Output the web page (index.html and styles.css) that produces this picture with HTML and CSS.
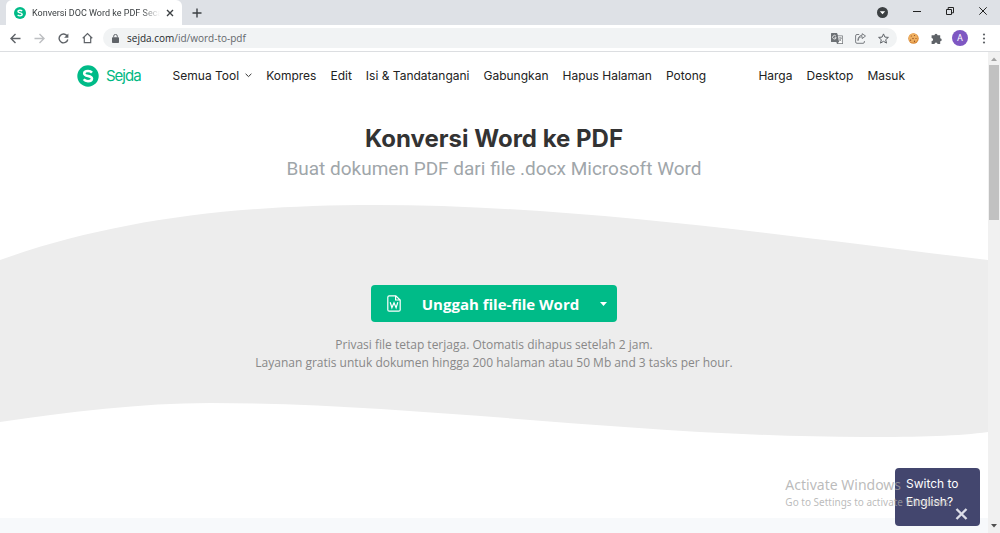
FILE: index.html
```html
<!DOCTYPE html>
<html lang="id">
<head>
<meta charset="utf-8">
<meta name="viewport" content="width=device-width, initial-scale=1">
<title>Konversi DOC Word ke PDF Secara Online</title>
<link rel="stylesheet" href="styles.css">
</head>
<body>
<div class="tab-strip">
  <div class="tab">
    <svg class="favicon" viewBox="0 0 22 22" aria-hidden="true"><circle cx="11" cy="11" r="11" fill="#00bb88"/><path d="M15 7.6C14 6.4 12.600 5.900 11 5.900c-2.200 0-3.800.9-3.800 2.500 0 3.500 7.800 1.500 7.800 5.100 0 1.700-1.700 2.700-4 2.700-1.800 0-3.300-.6-4.300-1.900" fill="none" stroke="#fff" stroke-width="2.500"/></svg>
    <span class="tab-title">Konversi DOC Word ke PDF Seca</span>
    <button class="icon-button tab-close" aria-label="Tutup tab"><svg width="8" height="8" viewBox="0 0 8 8"><path d="M1 1l6 6M7 1L1 7" stroke="#3c4043" stroke-width="1.400"/></svg></button>
  </div>
  <button class="icon-button new-tab" aria-label="Tab baru"><svg width="10" height="10" viewBox="0 0 10 10"><path d="M5 .5v9M.5 5h9" stroke="#3c4043" stroke-width="1.400"/></svg></button>
  <div class="window-controls">
    <button class="icon-button" aria-label="Cari tab"><svg width="11" height="11" viewBox="0 0 11 11"><circle cx="5.500" cy="5.500" r="5.500" fill="#3c4043"/><path d="M2.800 4.200h5.400L5.500 7.300z" fill="#fff"/></svg></button>
    <button class="icon-button" aria-label="Kecilkan"><svg width="8" height="8" viewBox="0 0 8 8"><path d="M0 4.500h8" stroke="#222"/></svg></button>
    <button class="icon-button" aria-label="Pulihkan"><svg width="8" height="8" viewBox="0 0 8 8"><path d="M.5 2.500h5v5h-5zM2.200 2.200V.5h5.300v5.300H5.800" fill="none" stroke="#222"/></svg></button>
    <button class="icon-button" aria-label="Tutup"><svg width="8" height="8" viewBox="0 0 8 8"><path d="M.3.3l7.400 7.400M7.700.3L.3 7.700" stroke="#222"/></svg></button>
  </div>
</div>
<div class="toolbar">
  <button class="icon-button" aria-label="Kembali"><svg width="11" height="11" viewBox="0 0 11 11"><path d="M10.500 5.500H1.200M5.500 1L1 5.500 5.500 10" fill="none" stroke="#5f6368" stroke-width="1.400"/></svg></button>
  <button class="icon-button" aria-label="Maju" disabled><svg width="11" height="11" viewBox="0 0 11 11"><path d="M.5 5.500h9.300M5.500 1L10 5.500 5.500 10" fill="none" stroke="#bdbfc2" stroke-width="1.400"/></svg></button>
  <button class="icon-button" aria-label="Muat ulang"><svg width="11" height="11" viewBox="0 0 11 11"><path d="M9.200 3A4.400 4.400 0 1 0 9.800 6.500" fill="none" stroke="#5f6368" stroke-width="1.400"/><path d="M10.400.5v4.300H6.100z" fill="#5f6368"/></svg></button>
  <button class="icon-button" aria-label="Beranda"><svg width="11" height="12" viewBox="0 0 12 12"><path d="M.8 6.300L6 1.200l5.200 5.100M2.500 5.200v5.900h7V5.200" fill="none" stroke="#5f6368" stroke-width="1.300"/></svg></button>
  <div class="address">
    <svg width="7" height="9" viewBox="0 0 7 9" aria-hidden="true"><rect y="3.200" width="7" height="5.800" rx=".8" fill="#5f6368"/><path d="M1.700 3.500V2.200a1.800 1.800 0 0 1 3.600 0v1.300" fill="none" stroke="#5f6368"/></svg>
    <p class="url"><span class="url-host">sejda.com</span>/id/word-to-pdf</p>
    <button class="icon-button" aria-label="Terjemahkan"><svg width="12" height="11" viewBox="0 0 12 11"><path d="M.6 0H6l1 2.600h4.400q.6 0 .6.600v7.200q0 .6-.6.600H6L5.300 9H.6Q0 9 0 8.400V.6Q0 0 .6 0z" fill="#6d7175"/><path d="M6.800 3.300h4.500v7H6.600l1.500-1.600z" fill="#fff"/><path d="M7.300 5h3.600M9.100 4.200V5M10.200 5c-.3 1.500-1.200 2.500-2 3M8.300 6.200l2 2" fill="none" stroke="#6d7175" stroke-width=".7"/><path d="M5 3.300A1.800 1.800 0 1 0 5.200 4.700H3.600" fill="none" stroke="#fff" stroke-width=".8"/></svg></button>
    <button class="icon-button" aria-label="Bagikan"><svg width="11" height="11" viewBox="0 0 11 11"><path d="M4.200 1.500H2q-1.400 0-1.400 1.400v6q0 1.400 1.400 1.400h6q1.400 0 1.400-1.400V8M3 7.600c.3-2.700 1.900-3.800 4.200-3.900V5.600L10.500 3 7.200.7v1.500C4.300 2.500 2.900 4.500 3 7.600z" fill="none" stroke="#6d7175" stroke-width=".9"/></svg></button>
    <button class="icon-button" aria-label="Tandai halaman"><svg width="11" height="11" viewBox="0 0 11 11"><path d="M5.500.9l1.400 3.200 3.500.3-2.700 2.300.8 3.400-3-1.800-3 1.800.8-3.400L.6 4.400l3.500-.3z" fill="none" stroke="#5f6368"/></svg></button>
  </div>
  <div class="extensions">
    <button class="icon-button" aria-label="Ekstensi kue"><svg width="11" height="11" viewBox="0 0 11 11"><circle cx="5.500" cy="5.500" r="5.200" fill="#d98a38"/><circle cx="5.200" cy="5" r="4.500" fill="#f0b060"/><g fill="#8a4a20"><circle cx="3.300" cy="3" r=".6"/><circle cx="6.500" cy="2.500" r=".6"/><circle cx="5" cy="5.500" r=".7"/><circle cx="8" cy="5.500" r=".6"/><circle cx="2.600" cy="7.200" r=".6"/><circle cx="6.500" cy="8.300" r=".7"/></g></svg></button>
    <button class="icon-button" aria-label="Ekstensi"><svg width="11" height="11" viewBox="0 0 11 11"><path d="M.6 2.300h2.900a1.500 1.500 0 1 1 3 0h2.700v2.900a1.500 1.500 0 1 1 0 3v2.700H6.500a1.500 1.500 0 0 0-3 0H.6V8a1.500 1.500 0 0 0 0-3z" fill="#5f6368"/></svg></button>
    <button class="avatar" aria-label="Profil">A</button>
    <button class="icon-button" aria-label="Menu"><svg width="4" height="11" viewBox="0 0 4 11"><g fill="#5f6368"><circle cx="2" cy="1.500" r="1.100"/><circle cx="2" cy="5.500" r="1.100"/><circle cx="2" cy="9.500" r="1.100"/></g></svg></button>
  </div>
</div>
<div class="viewport">
  <div class="page">
    <header class="site-header">
      <a class="logo" href="#"><svg width="22" height="22" viewBox="0 0 22 22" aria-hidden="true"><circle cx="11" cy="11" r="10.700" fill="#00bb88"/><path d="M15 7.600C14 6.400 12.600 5.900 11 5.900c-2.200 0-3.800.9-3.800 2.500 0 3.500 7.800 1.500 7.800 5.100 0 1.700-1.700 2.700-4 2.700-1.800 0-3.300-.6-4.300-1.900" fill="none" stroke="#fff" stroke-width="2.500"/></svg>Sejda</a>
      <nav class="main-nav">
        <a class="all-tools" href="#">Semua Tool <svg width="7" height="5" viewBox="0 0 7 5" aria-hidden="true"><path d="M.6.8l2.900 2.800L6.400.8" fill="none" stroke="#333"/></svg></a>
        <a href="#">Kompres</a><a href="#">Edit</a><a href="#">Isi &amp; Tandatangani</a><a href="#">Gabungkan</a><a href="#">Hapus Halaman</a><a href="#">Potong</a>
      </nav>
      <nav class="account-nav"><a href="#">Harga</a><a href="#">Desktop</a><a href="#">Masuk</a></nav>
    </header>
    <main>
      <div class="heading">
        <h1>Konversi Word ke PDF</h1>
        <p>Buat dokumen PDF dari file .docx Microsoft Word</p>
      </div>
      <section class="upload">
        <svg class="wave" viewBox="0 0 988 232" preserveAspectRatio="none" aria-hidden="true"><path d="M0 55C110 16 230 0 375 0C580 0 800 33 988 55V227C960 231 920 232 865 232C640 232 420 198 210 198C140 198 70 207 0 217z" fill="#ededed"/></svg>
        <div class="upload-content">
          <div class="upload-group">
            <button class="upload-button"><svg width="14" height="17" viewBox="0 0 14 17" aria-hidden="true"><path d="M2.200.8h6.600l4.400 4.200v9.700q0 1.500-1.500 1.500H2.200Q.8 16.200.8 14.700V2.200Q.8.8 2.200.8zM8.600.8V5h4.600" fill="none" stroke="#fff" stroke-width="1.200"/><path d="M3.200 7.300l1.700 5.500L7 7.800l2.100 5 1.700-5.500" fill="none" stroke="#fff" stroke-width="1.200"/></svg><span>Unggah file-file Word</span></button>
            <button class="upload-more" aria-label="Sumber lain"><svg width="7" height="4" viewBox="0 0 7 4"><path d="M0 0h7L3.500 4z" fill="#fff"/></svg></button>
          </div>
          <p>Privasi file tetap terjaga. Otomatis dihapus setelah 2 jam.<br>Layanan gratis untuk dokumen hingga 200 halaman atau 50 Mb and 3 tasks per hour.</p>
        </div>
      </section>
    </main>
    <div class="next-section"></div>
  </div>
  <div class="scrollbar" aria-hidden="true">
    <svg width="6" height="4" viewBox="0 0 6 4"><path d="M0 4l3-3.500L6 4z" fill="#a3a3a3"/></svg>
    <div class="scroll-track"><div class="scroll-thumb"></div></div>
    <svg width="6" height="4" viewBox="0 0 6 4"><path d="M0 0l3 3.500L6 0z" fill="#505050"/></svg>
  </div>
</div>
<aside class="language-toast">
  <a href="#">Switch to English?</a>
  <button class="icon-button toast-close" aria-label="Tutup"><svg width="13" height="12" viewBox="0 0 13 12"><path d="M1.500 1l10 10M11.500 1l-10 10" stroke="#dcdde8" stroke-width="2.400"/></svg></button>
</aside>
<div class="watermark"><p class="watermark-title">Activate Windows</p><p>Go to Settings to activate Windows.</p></div>
</body>
</html>
```
FILE: styles.css
```css
* { box-sizing: border-box; }
body {
  margin: 0;
  height: 100vh;
  display: flex;
  flex-direction: column;
  position: relative;
  overflow: hidden;
  background: #fff;
  color: #222;
  font-family: "Open Sans", "Liberation Sans", sans-serif;
  font-size: 12px;
}
h1, p { margin: 0; }
a { color: inherit; text-decoration: none; }
button { font: inherit; color: inherit; border: 0; padding: 0; background: none; }
svg { display: block; flex: none; }
.icon-button { display: flex; align-items: center; justify-content: center; flex: none; }

.tab-strip { display: flex; align-items: center; height: 25px; flex: none; padding-left: 6px; background: #dee1e6; }
.tab { display: flex; align-items: center; width: 176px; height: 25px; padding: 0 8px; gap: 6px; background: #fff; border-radius: 6px 6px 0 0; }
.favicon { width: 12px; height: 12px; }
.tab-title {
  flex: 1;
  min-width: 0;
  white-space: nowrap;
  font: 9px Roboto, sans-serif;
  color: #3c4043;
  -webkit-mask-image: linear-gradient(90deg, #000 85%, transparent);
  mask-image: linear-gradient(90deg, #000 85%, transparent);
}
.new-tab { margin-left: 10px; }
.window-controls { display: flex; align-items: center; gap: 25px; margin-left: auto; padding: 0 13px 4px 0; }
.window-controls button:first-child { padding-top: 4px; }

.toolbar { display: flex; align-items: center; gap: 13px; height: 27px; flex: none; padding: 0 14px 0 10px; border-bottom: 1px solid #dcdee1; }
.address { flex: 1; display: flex; align-items: center; gap: 12px; height: 20px; padding: 0 8px 0 9px; margin-left: -3px; border-radius: 10px; background: #f1f3f4; }
.url { flex: 1; margin-left: -4px; font: 10px "Open Sans", sans-serif; color: #63676b; }
.url-host { color: #25282b; }
.extensions { display: flex; align-items: center; gap: 12px; margin-left: -2px; }
.avatar { width: 16px; height: 16px; margin: 0 2px 0 -2px; border-radius: 50%; background: #7e57c2; color: #fff; font: 9px Roboto, sans-serif; }

.viewport { flex: 1; min-height: 0; display: flex; }
.page { flex: 1; min-width: 0; display: flex; flex-direction: column; }
.site-header { display: flex; align-items: center; height: 47px; padding: 0 83px 0 77px; white-space: nowrap; }
.logo { display: flex; align-items: center; gap: 7px; margin-right: 32px; color: #00b883; font-family: Inter, sans-serif; font-size: 15px; letter-spacing: -1px; }
.main-nav, .account-nav { display: flex; gap: 14px; font: 12px/18px Inter, sans-serif; }
.account-nav { margin-left: auto; }
.all-tools { display: flex; align-items: center; gap: 6px; }
.heading { padding-top: 24px; text-align: center; }
h1 { font: 700 24px/32px Inter, sans-serif; color: #333; }
.heading p { font: 19px/28px Roboto, sans-serif; color: #9fa6aa; }
.upload { display: grid; margin-top: 22px; }
.wave { grid-area: 1 / 1; width: 100%; height: 232px; }
.upload-content { grid-area: 1 / 1; z-index: 1; padding-top: 80px; text-align: center; color: #888; }
.upload-content p { margin-top: 14px; line-height: 18px; }
.upload-group { display: inline-flex; height: 37px; border-radius: 4px; background: #00bb88; color: #fff; }
.upload-button { display: flex; align-items: center; gap: 21px; padding: 0 21px 0 16px; font: 700 15px "Open Sans", sans-serif; }
.upload-more { display: flex; align-items: center; padding-right: 10px; }
.next-section { height: 15px; margin-top: auto; background: #f7f9fb; }

.scrollbar { width: 12px; display: flex; flex-direction: column; align-items: center; gap: 4px; padding: 5px 0; background: #f1f1f1; }
.scroll-track { flex: 1; width: 10px; }
.scroll-thumb { height: 34%; background: #c1c1c1; }

.language-toast { position: absolute; right: 20px; bottom: 7px; width: 85px; height: 58px; padding: 7px 11px; border-radius: 4px; background: #43466e; color: #fff; font: 12px/18px Inter, sans-serif; }
.toast-close { position: absolute; right: 12px; bottom: 6px; }
.watermark { position: absolute; right: 49px; bottom: 24px; color: rgba(165, 165, 165, .75); font: 10px/14px "Noto Sans", sans-serif; white-space: nowrap; pointer-events: none; }
.watermark-title { font-size: 14px; line-height: 20px; }
```
